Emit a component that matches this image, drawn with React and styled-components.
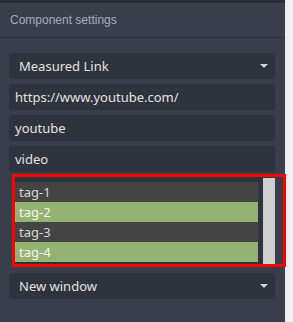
import styled, { createGlobalStyle } from "styled-components"

const GlobalStyle = createGlobalStyle`
  html, body {
    margin: 0;
    padding: 0;
    background: #eeeff1;
  }
`

const Page = styled.div`
  display: flex;
  width: 293px;
  height: 322px;
  overflow: hidden;
`

const Panel = styled.div`
  width: 285px;
  height: 100%;
  background-color: #393e4a;
  display: flex;
  flex-direction: column;
  border-top: 3px solid #2b2f38;
  box-sizing: border-box;
`

const Header = styled.div`
  height: 34px;
  display: flex;
  align-items: center;
  padding-left: 10px;
  border-bottom: 1px solid #2c3039;
  font-family: "Liberation Sans", Arial, sans-serif;
  font-size: 12px;
  color: #a3adbf;
`

const Body = styled.div`
  display: flex;
  flex-direction: column;
  gap: 5px;
  padding: 15px 10px 0 9px;
`

const Field = styled.div`
  height: 26px;
  display: flex;
  align-items: center;
  justify-content: space-between;
  padding: 0 6px 0 ${(p) => (p.$select ? "10px" : "6px")};
  background-color: #2f333d;
  border-radius: 2px;
  font-family: "Noto Sans", "Open Sans", sans-serif;
  font-size: 13px;
  color: #e3e3e1;
`

const Caret = styled.span`
  width: 0;
  height: 0;
  margin-right: 1px;
  border-left: 4px solid transparent;
  border-right: 4px solid transparent;
  border-top: 4px solid #cfd2d8;
`

const Outlined = styled.div`
  margin: 0 0 4px 6px;
  width: 260px;
  padding-right: 8px;
  outline: 3px solid #ff0000;
`

const ListBox = styled.div`
  display: flex;
  background-color: #2f333d;
  height: 87px;
`

const Items = styled.div`
  flex: 1;
  padding: 5px 5px 2px 0;
  display: flex;
  flex-direction: column;
`

const Item = styled.div`
  height: 20px;
  display: flex;
  align-items: center;
  padding-left: 4px;
  font-family: "Noto Sans", "Open Sans", sans-serif;
  font-size: 13px;
  color: ${(p) => (p.$selected ? "#f4f6ee" : "#d6d8dc")};
  background-color: ${(p) => (p.$selected ? "#94b373" : "#444444")};
`

const Scrollbar = styled.div`
  width: 12px;
  margin-top: 1px;
  background-color: #cfcfcf;
`

const tags = [
  { name: "tag-1", selected: false },
  { name: "tag-2", selected: true },
  { name: "tag-3", selected: false },
  { name: "tag-4", selected: true },
]

const App = () => {
  return (
    <Page>
      <GlobalStyle />
      <Panel>
        <Header>Component settings</Header>
        <Body>
          <Field $select>
            <span>Measured Link</span>
            <Caret />
          </Field>
          <Field>https://www.youtube.com/</Field>
          <Field>youtube</Field>
          <Field>video</Field>

          <Outlined>
            <ListBox>
              <Items>
                {tags.map((tag) => (
                  <Item key={tag.name} $selected={tag.selected}>
                    {tag.name}
                  </Item>
                ))}
              </Items>
              <Scrollbar />
            </ListBox>
          </Outlined>

          <Field $select>
            <span>New window</span>
            <Caret />
          </Field>
        </Body>
      </Panel>
    </Page>
  )
}

export default App
